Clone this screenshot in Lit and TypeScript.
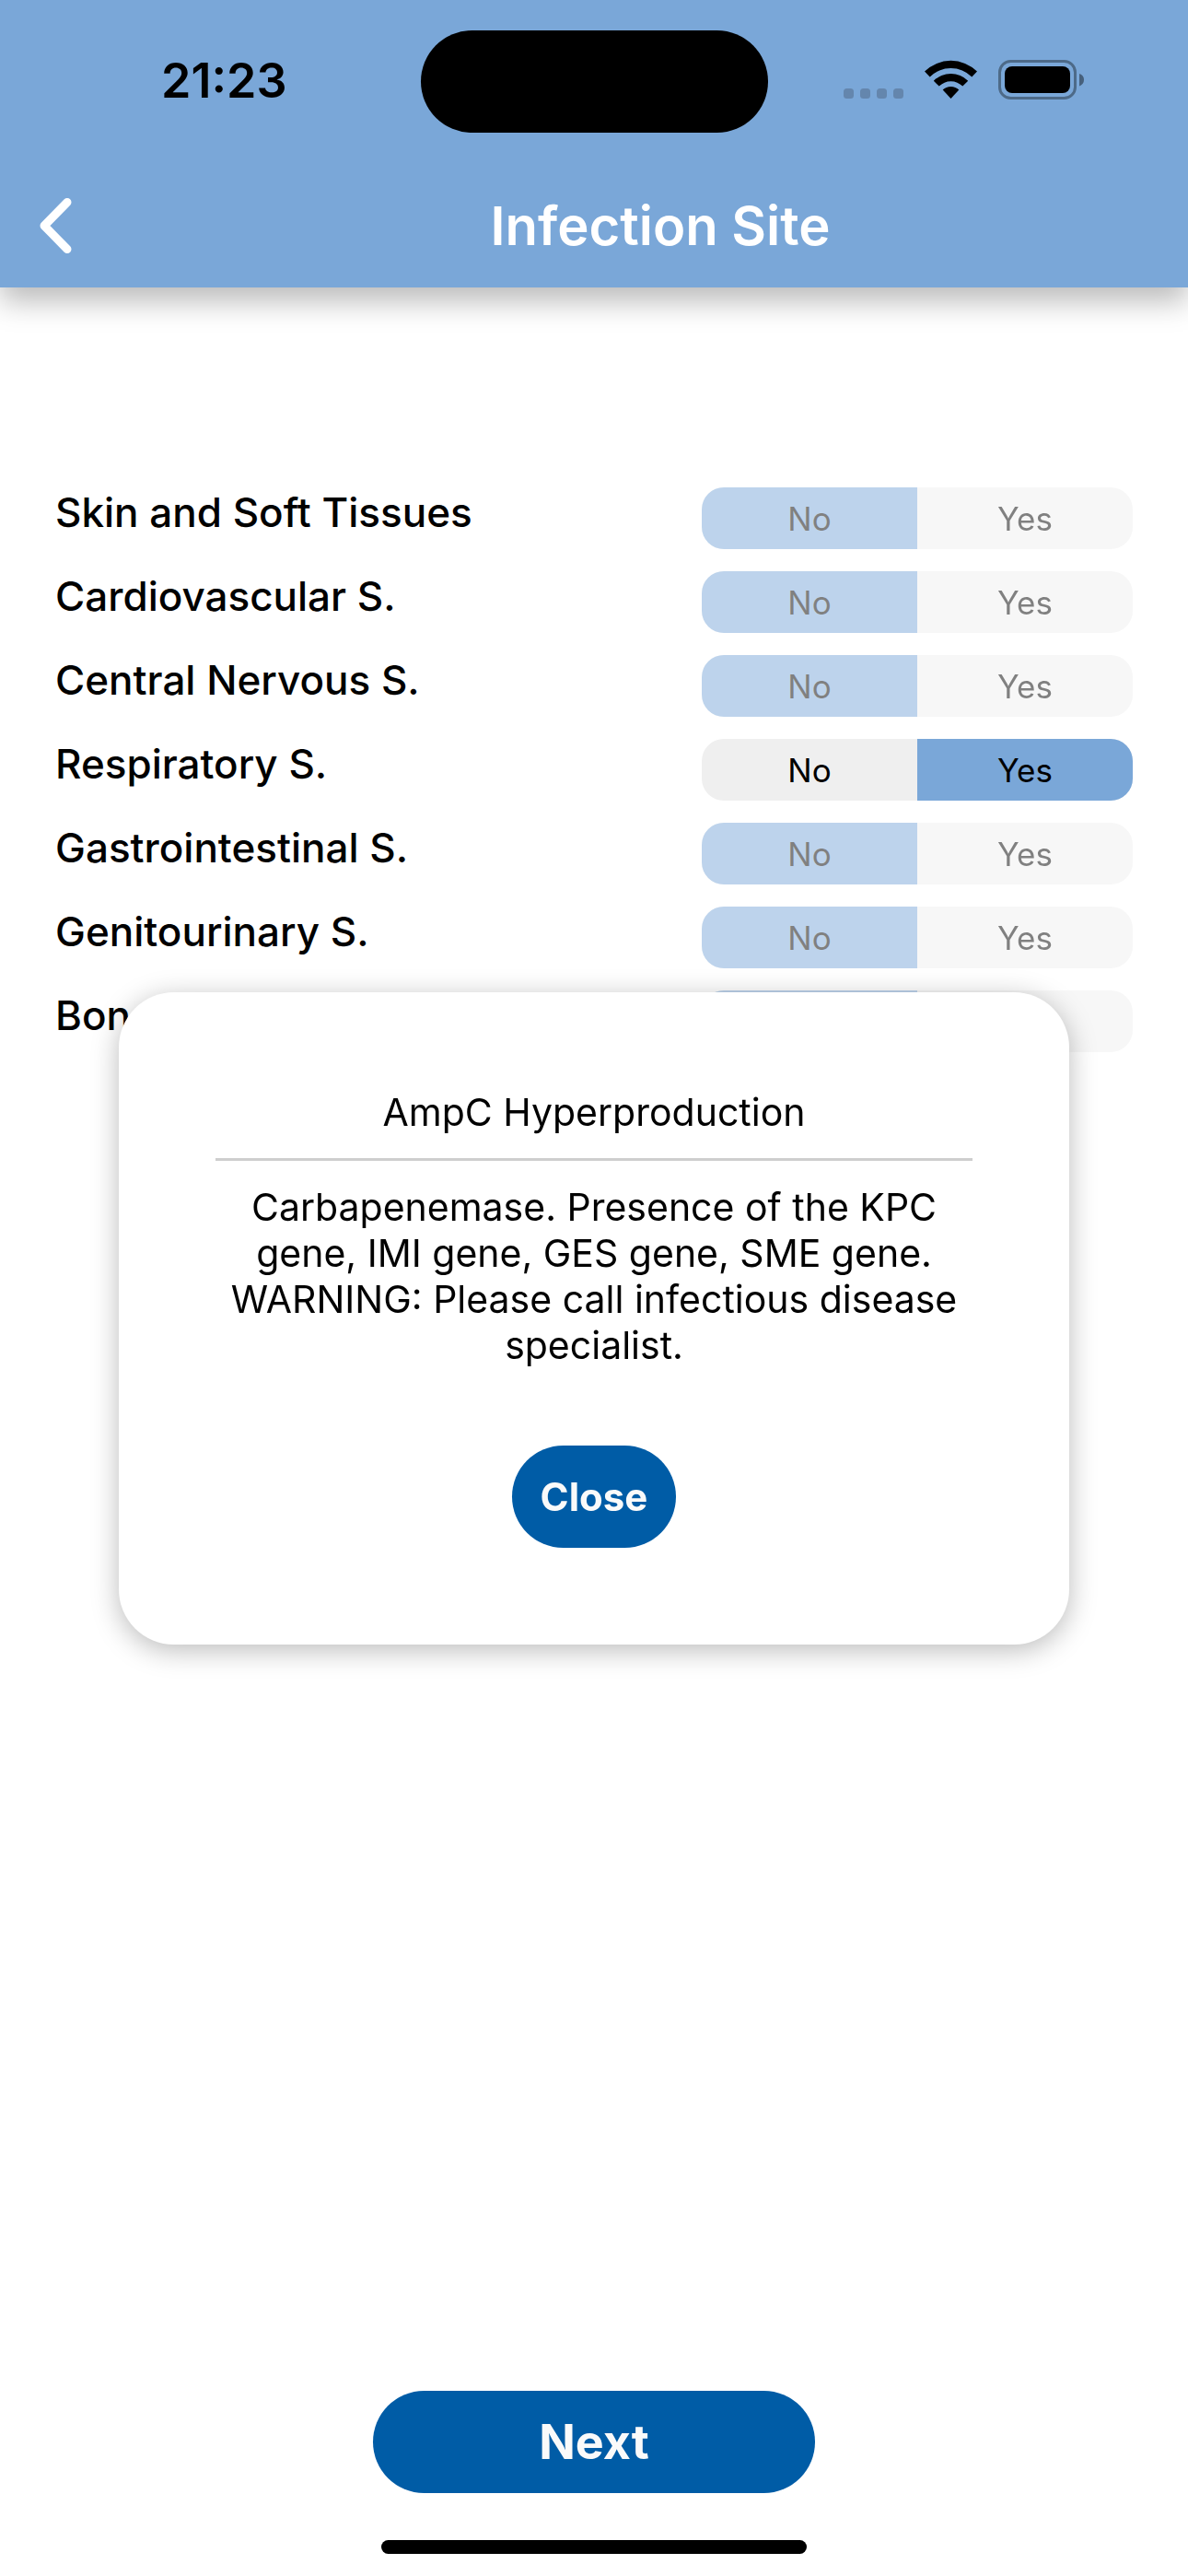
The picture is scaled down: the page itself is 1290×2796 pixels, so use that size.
import { LitElement, html, css, svg } from "lit";
import { customElement, property, state } from "lit/decorators.js";

type Answer = "No" | "Yes";

interface Site {
  id: string;
  label: string;
  answer: Answer;
  locked: boolean;
}

const ANSWERS: Answer[] = ["No", "Yes"];

@customElement("status-bar")
export class StatusBar extends LitElement {
  static styles = css`
    :host {
      display: grid;
      grid-template-columns: 1fr auto 1fr;
      align-items: start;
      padding: 33px 0 0;
      color: #000;
    }
    .time {
      justify-self: center;
      padding: 25px 0 0 30px;
      font-size: 52px;
      line-height: 60px;
      font-weight: 600;
    }
    .island {
      width: 377px;
      height: 111px;
      border-radius: 56px;
      background: #000;
    }
    .icons {
      display: flex;
      align-items: flex-end;
      gap: 23px;
      justify-self: center;
      padding: 32px 30px 0 0;
    }
    svg {
      display: block;
    }
  `;

  render() {
    return html`
      <time class="time">21:23</time>
      <span class="island"></span>
      <div class="icons">
        <svg width="65" height="43" viewBox="0 0 65 43" aria-hidden="true">
          ${[0, 18, 36, 54].map(
            (x) => svg`<rect x=${x} y="31" width="11" height="11" rx="3.5" fill="#6486ad" />`
          )}
        </svg>
        <svg width="57" height="43" viewBox="0 0 57 43" aria-hidden="true">
          <path d="M0 12.6 A40.5 40.5 0 0 1 57 12.6 L51.3 18.4 A32.4 32.4 0 0 0 5.7 18.4 Z" />
          <path d="M9.8 22.7 A26.5 26.5 0 0 1 47.2 22.7 L41.3 28.6 A18.2 18.2 0 0 0 15.7 28.6 Z" />
          <path d="M19.7 32.6 A12.4 12.4 0 0 1 37.3 32.6 L28.5 42 Z" />
        </svg>
        <svg width="93" height="43" viewBox="0 0 93 43" aria-hidden="true">
          <rect x="1.5" y="1.5" width="82" height="40" rx="12" fill="none" stroke="#4d6a88" stroke-width="3" />
          <rect x="7" y="7" width="71" height="29" rx="8" />
          <path d="M88 15 Q93 16.5 93 21.5 Q93 26.5 88 28.5 Z" fill="#46607c" />
        </svg>
      </div>
    `;
  }
}

@customElement("answer-toggle")
export class AnswerToggle extends LitElement {
  @property() name = "";
  @property() value: Answer = "No";
  @property() label = "";
  @property({ type: Boolean }) locked = false;

  static styles = css`
    :host {
      display: block;
    }
    .group {
      display: grid;
      grid-template-columns: 1fr 1fr;
      margin: 0;
      padding: 0;
      border: 0;
      border-radius: 24px;
      overflow: hidden;
      background: #efefef;
    }
    .group:disabled {
      opacity: 0.5;
    }
    .option {
      position: relative;
      display: grid;
      place-items: center;
      height: 67px;
      font-size: 35px;
      line-height: 42px;
      color: #000;
    }
    .option:has(:checked) {
      background: #7aa7d8;
    }
    .option:has(:focus-visible) {
      box-shadow: inset 0 0 0 4px #005ca6;
    }
    .radio {
      position: absolute;
      inset: 0;
      width: 100%;
      height: 100%;
      margin: 0;
      opacity: 0;
    }
  `;

  private choose(answer: Answer) {
    this.value = answer;
  }

  render() {
    return html`
      <fieldset class="group" aria-label=${this.label} ?disabled=${this.locked}>
        ${ANSWERS.map(
          (answer) => html`
            <label class="option">
              <input
                class="radio"
                type="radio"
                name=${this.name}
                .value=${answer}
                .checked=${this.value === answer}
                @change=${() => this.choose(answer)}
              />
              ${answer}
            </label>
          `
        )}
      </fieldset>
    `;
  }
}

@customElement("app-root")
export class AppRoot extends LitElement {
  @state() private dialogOpen = true;

  private sites: Site[] = [
    { id: "skin", label: "Skin and Soft Tissues", answer: "No", locked: true },
    { id: "cardio", label: "Cardiovascular S.", answer: "No", locked: true },
    { id: "nervous", label: "Central Nervous S.", answer: "No", locked: true },
    { id: "respiratory", label: "Respiratory S.", answer: "Yes", locked: false },
    { id: "gastro", label: "Gastrointestinal S.", answer: "No", locked: true },
    { id: "genito", label: "Genitourinary S.", answer: "No", locked: true },
    { id: "bone", label: "Bone", answer: "No", locked: true },
  ];

  static styles = css`
    :host {
      display: flex;
      flex-direction: column;
      min-height: 100vh;
      background: #fff;
      color: #000;
      font-family: Inter, "Liberation Sans", sans-serif;
    }
    button {
      border: 0;
      font-family: inherit;
      cursor: pointer;
    }
    .header {
      background: #7aa7d8;
      box-shadow: 0 15px 30px rgba(0, 0, 0, 0.27);
    }
    .bar {
      display: flex;
      align-items: center;
      height: 134px;
      padding-top: 34px;
    }
    .back {
      display: grid;
      place-items: center start;
      width: 144px;
      height: 120px;
      padding: 0 0 0 42px;
      background: none;
    }
    .title {
      flex: 1;
      margin: 0;
      text-align: center;
      font-size: 58px;
      line-height: 72px;
      font-weight: 600;
      color: #fff;
    }
    .main {
      position: relative;
      flex: 1;
      padding: 217px 60px 0;
    }
    .sites {
      display: flex;
      flex-direction: column;
      gap: 24px;
      margin: 0;
      padding: 0;
      list-style: none;
    }
    .site {
      display: grid;
      grid-template-columns: 3fr 2fr;
      align-items: start;
    }
    .label {
      font-size: 44px;
      line-height: 54px;
      font-weight: 500;
    }
    .overlay {
      position: absolute;
      inset: 0;
      display: grid;
      place-items: center;
    }
    .dialog {
      display: flex;
      flex-direction: column;
      align-items: center;
      box-sizing: border-box;
      width: 80%;
      padding: 105px;
      border-radius: 60px;
      background: #fff;
      box-shadow: 0 6px 30px rgba(0, 0, 0, 0.27);
      text-align: center;
      font-size: 41px;
      line-height: 50px;
    }
    .heading {
      align-self: stretch;
      margin: 0;
      padding-bottom: 25px;
      border-bottom: 3px solid #cecece;
      font-size: inherit;
      font-weight: 400;
    }
    .message {
      margin: 25px 0 84px;
    }
    .pill {
      height: 111px;
      border-radius: 56px;
      background: #005ca6;
      color: #fafafa;
      font-weight: 700;
    }
    .close {
      padding: 0 31px;
      font-size: 42px;
    }
    .footer {
      display: flex;
      flex-direction: column;
      align-items: center;
      gap: 51px;
      padding: 45px 0 24px;
    }
    .next {
      width: 480px;
      font-size: 52px;
    }
    .home {
      width: 462px;
      height: 15px;
      border-radius: 8px;
      background: #000;
    }
  `;

  render() {
    return html`
      <header class="header">
        <status-bar></status-bar>
        <div class="bar">
          <button class="back" aria-label="Back">
            <svg width="36" height="60" viewBox="0 0 36 60" aria-hidden="true">
              <path
                d="M31 4.5 L6 30 L31 55.5"
                fill="none"
                stroke="#fff"
                stroke-width="9"
                stroke-linecap="round"
                stroke-linejoin="round"
              />
            </svg>
          </button>
          <h1 class="title">Infection Site</h1>
        </div>
      </header>
      <main class="main">
        <ul class="sites">
          ${this.sites.map(
            (site) => html`
              <li class="site">
                <span class="label">${site.label}</span>
                <answer-toggle
                  .name=${site.id}
                  .label=${site.label}
                  .value=${site.answer}
                  .locked=${site.locked}
                ></answer-toggle>
              </li>
            `
          )}
        </ul>
        ${this.dialogOpen
          ? html`
              <div class="overlay">
                <section class="dialog" role="dialog" aria-labelledby="dialog-heading">
                  <h2 class="heading" id="dialog-heading">AmpC Hyperproduction</h2>
                  <p class="message">
                    Carbapenemase. Presence of the KPC gene, IMI gene, GES gene, SME gene. WARNING:
                    Please call infectious disease specialist.
                  </p>
                  <button class="pill close" @click=${() => (this.dialogOpen = false)}>Close</button>
                </section>
              </div>
            `
          : null}
      </main>
      <footer class="footer">
        <button class="pill next">Next</button>
        <span class="home"></span>
      </footer>
    `;
  }
}
